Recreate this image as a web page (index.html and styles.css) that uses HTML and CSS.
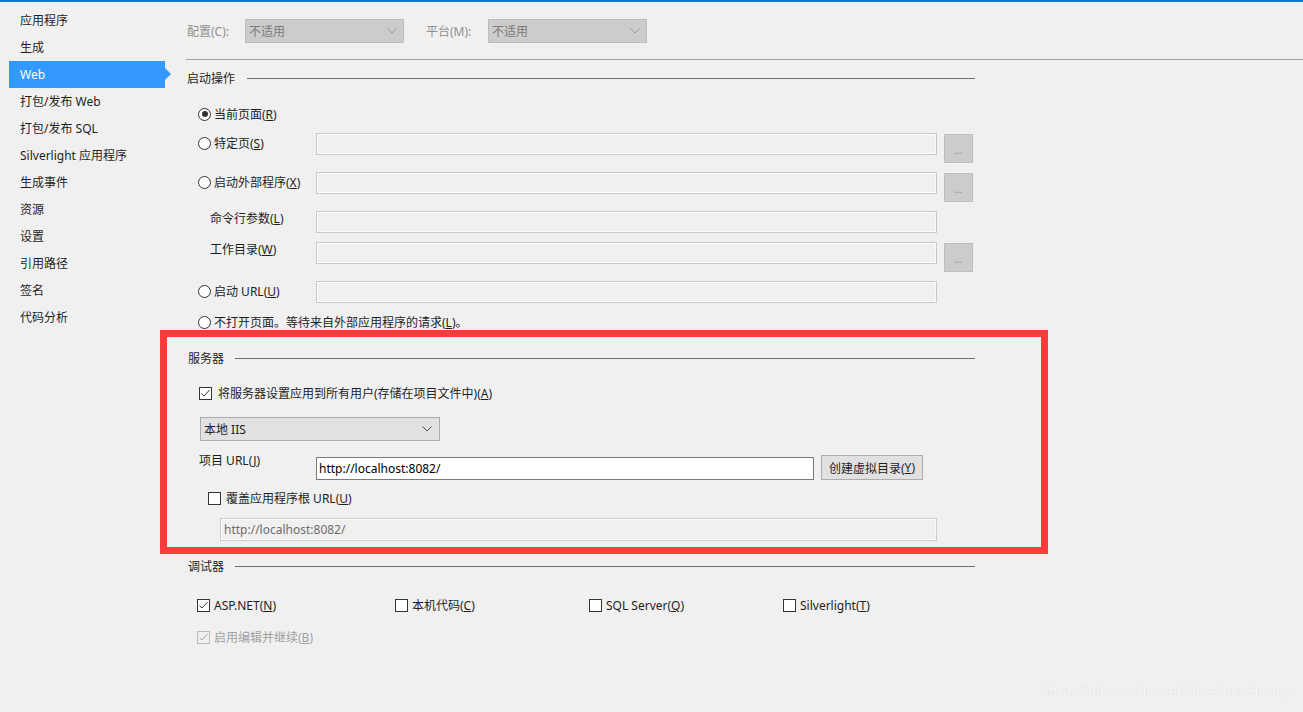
FILE: index.html
```html
<!DOCTYPE html>
<html lang="zh-CN">
<head>
<meta charset="utf-8">
<title>Web</title>
<link rel="stylesheet" href="styles.css">
</head>
<body>
<div class="topbar"></div>
<div class="layout">
  <nav class="sidebar">
    <div class="nav-item">应用程序</div>
    <div class="nav-item">生成</div>
    <div class="nav-item active">Web</div>
    <div class="nav-item">打包/发布 Web</div>
    <div class="nav-item">打包/发布 SQL</div>
    <div class="nav-item">Silverlight 应用程序</div>
    <div class="nav-item">生成事件</div>
    <div class="nav-item">资源</div>
    <div class="nav-item">设置</div>
    <div class="nav-item">引用路径</div>
    <div class="nav-item">签名</div>
    <div class="nav-item">代码分析</div>
  </nav>
  <main class="main">
    <div class="cfg-row">
      <span class="cfg-label">配置(C):</span>
      <div class="cfg-select"><span>不适用</span><svg class="chev" width="10" height="6" viewBox="0 0 10 6"><polyline points="0.5,0.5 5,5 9.5,0.5" fill="none" stroke="#9a9a9a" stroke-width="1"/></svg></div>
      <span class="cfg-label cfg-label2">平台(M):</span>
      <div class="cfg-select"><span>不适用</span><svg class="chev" width="10" height="6" viewBox="0 0 10 6"><polyline points="0.5,0.5 5,5 9.5,0.5" fill="none" stroke="#9a9a9a" stroke-width="1"/></svg></div>
    </div>
    <div class="rule"></div>

    <div class="sec sec-start"><span class="sec-title">启动操作</span><span class="sec-line"></span></div>

    <div class="opt-row row-a">
      <div class="opt-label"><span class="radio checked"></span>当前页面(<u>R</u>)</div>
    </div>
    <div class="opt-row gap-s">
      <div class="opt-label"><span class="radio"></span>特定页(<u>S</u>)</div>
      <div class="field"></div>
      <div class="browse">...</div>
    </div>
    <div class="opt-row gap-l">
      <div class="opt-label"><span class="radio"></span>启动外部程序(<u>X</u>)</div>
      <div class="field"></div>
      <div class="browse">...</div>
    </div>
    <div class="opt-row gap-l">
      <div class="sub-label">命令行参数(<u>L</u>)</div>
      <div class="field"></div>
    </div>
    <div class="opt-row gap-s">
      <div class="sub-label">工作目录(<u>W</u>)</div>
      <div class="field"></div>
      <div class="browse">...</div>
    </div>
    <div class="opt-row gap-l">
      <div class="opt-label"><span class="radio"></span>启动 URL(<u>U</u>)</div>
      <div class="field"></div>
    </div>
    <div class="opt-row row-g gap-s">
      <div class="opt-label wide"><span class="radio"></span>不打开页面。等待来自外部应用程序的请求(<u>L</u>)。</div>
    </div>

    <div class="sec sec-server"><span class="sec-title">服务器</span><span class="sec-line"></span></div>

    <div class="check-row server-check">
      <span class="checkbox"><svg width="11" height="11" viewBox="0 0 11 11"><polyline points="1.5,5.5 4,8 9.5,2" fill="none" stroke="#333" stroke-width="1"/></svg></span>
      <span>将服务器设置应用到所有用户(存储在项目文件中)(<u>A</u>)</span>
    </div>

    <div class="server-select"><span>本地 IIS</span><svg width="10" height="6" viewBox="0 0 10 6"><polyline points="0.5,0.5 5,5 9.5,0.5" fill="none" stroke="#505050" stroke-width="1"/></svg></div>

    <div class="url-row">
      <div class="url-label">项目 URL(<u>J</u>)</div>
      <div class="url-input">http://localhost:8082/</div>
      <div class="btn">创建虚拟目录(<u>Y</u>)</div>
    </div>

    <div class="check-row override-check">
      <span class="checkbox"></span>
      <span>覆盖应用程序根 URL(<u>U</u>)</span>
    </div>

    <div class="disabled-input">http://localhost:8082/</div>

    <div class="sec sec-debug"><span class="sec-title">调试器</span><span class="sec-line"></span></div>

    <div class="debug-row">
      <div class="debug-item w198"><span class="checkbox"><svg width="11" height="11" viewBox="0 0 11 11"><polyline points="1.5,5.5 4,8 9.5,2" fill="none" stroke="#333" stroke-width="1"/></svg></span><span>ASP.NET(<u>N</u>)</span></div>
      <div class="debug-item w194"><span class="checkbox"></span><span>本机代码(<u>C</u>)</span></div>
      <div class="debug-item w194"><span class="checkbox"></span><span>SQL Server(<u>Q</u>)</span></div>
      <div class="debug-item"><span class="checkbox"></span><span>Silverlight(<u>T</u>)</span></div>
    </div>
    <div class="debug-row disabled-row">
      <div class="debug-item"><span class="checkbox dis"><svg width="11" height="11" viewBox="0 0 11 11"><polyline points="1.5,5.5 4,8 9.5,2" fill="none" stroke="#a8a8a8" stroke-width="1"/></svg></span><span>启用编辑并继续(<u>B</u>)</span></div>
    </div>
  </main>
</div>
<div class="annot"></div>
<div class="watermark">https://blog.csdn.net/SherlockHuang</div>
</body>
</html>
```

FILE: styles.css
```css
html, body {
  margin: 0;
  padding: 0;
}
body {
  position: relative;
  width: 1303px;
  height: 712px;
  overflow: hidden;
  background: #f0f0f0;
  color: #1e1e1e;
  font-family: "Segoe UI", "Noto Sans", "Noto Sans CJK SC", sans-serif;
  font-size: 12px;
}
u { text-decoration: underline; text-underline-offset: 1px; }

.topbar {
  height: 2px;
  background: #0e78cc;
}
.layout {
  display: flex;
}
.sidebar {
  width: 186px;
  flex: none;
  padding-top: 5px;
  box-sizing: border-box;
}
.nav-item {
  position: relative;
  margin-left: 9px;
  width: 156px;
  height: 27px;
  line-height: 27px;
  padding-left: 11px;
  box-sizing: border-box;
  white-space: nowrap;
}
.nav-item.active {
  background: #3399ff;
  color: #ffffff;
}
.nav-item.active::after {
  content: "";
  position: absolute;
  right: -6px;
  top: 7px;
  border-left: 6px solid #3399ff;
  border-top: 6.5px solid transparent;
  border-bottom: 6.5px solid transparent;
}

.main {
  flex: 1;
}

/* configuration row */
.cfg-row {
  display: flex;
  align-items: center;
  height: 24px;
  margin-top: 17px;
  color: #8f8f8f;
}
.cfg-label {
  width: 59px;
  padding-left: 1px;
  box-sizing: border-box;
  white-space: nowrap;
}
.cfg-label2 {
  margin-left: 22px;
  width: 62px;
  padding-left: 0;
}
.cfg-select {
  width: 159px;
  height: 24px;
  box-sizing: border-box;
  background: #cccccc;
  border: 1px solid #bdbdbd;
  padding: 0 6px 0 3px;
  display: flex;
  align-items: center;
  justify-content: space-between;
  color: #7a7a7a;
}
.rule {
  margin-top: 16px;
  height: 1px;
  background: #a0a0a0;
}

/* section headers */
.sec {
  display: flex;
  align-items: center;
  width: 789px;
  height: 16px;
}
.sec-title {
  padding-left: 1px;
  white-space: nowrap;
}
.sec-line {
  flex: 1;
  height: 1px;
  background: #6e6e6e;
  margin-left: 12px;
}
.sec-start { margin-top: 10px; }
.sec-server { margin-top: 18px; }
.sec-server .sec-title, .sec-debug .sec-title { padding-left: 2px; }
.sec-server .sec-line, .sec-debug .sec-line { margin-left: 11px; }
.sec-debug { margin-top: 17px; }

/* startup option rows */
.opt-row {
  display: flex;
  align-items: flex-start;
  height: 22px;
}
.row-a { margin-top: 18px; height: 20px; }
.row-g { height: 20px; }
.gap-s { margin-top: 9px; }
.gap-l { margin-top: 17px; }
.opt-label {
  width: 130px;
  height: 20px;
  display: flex;
  align-items: center;
  padding-left: 12px;
  box-sizing: border-box;
  white-space: nowrap;
}
.opt-label.wide { width: auto; }
.sub-label {
  width: 130px;
  height: 16px;
  line-height: 16px;
  padding-left: 24px;
  box-sizing: border-box;
  white-space: nowrap;
}
.radio {
  width: 13px;
  height: 13px;
  border-radius: 50%;
  border: 1px solid #333333;
  background: #ffffff;
  box-sizing: border-box;
  margin-right: 3px;
  flex: none;
  position: relative;
}
.radio.checked::after {
  content: "";
  position: absolute;
  left: 2.5px;
  top: 2.5px;
  width: 6px;
  height: 6px;
  border-radius: 50%;
  background: #333333;
}
.field {
  width: 621px;
  height: 22px;
  box-sizing: border-box;
  border: 1px solid #c9c9c9;
  box-shadow: inset 0 0 0 1px #fbfbfb;
  background: #f0f0f0;
  flex: none;
}
.browse {
  width: 29px;
  height: 29px;
  margin-left: 7px;
  margin-top: 1px;
  box-sizing: border-box;
  background: #cccccc;
  border: 1px solid #bfbfbf;
  color: #8c8c8c;
  font-size: 10px;
  line-height: 10px;
  display: flex;
  justify-content: center;
  align-items: flex-end;
  padding-bottom: 7px;
  flex: none;
}

/* server section */
.check-row {
  display: flex;
  align-items: center;
  height: 20px;
  white-space: nowrap;
}
.checkbox {
  width: 13px;
  height: 13px;
  box-sizing: border-box;
  border: 1px solid #333333;
  background: #ffffff;
  flex: none;
  display: flex;
  align-items: center;
  justify-content: center;
  margin-right: 5px;
}
.checkbox.dis {
  border-color: #bcbcbc;
  background: #f0f0f0;
}
.server-check {
  margin-top: 17px;
  padding-left: 13px;
}
.server-check .checkbox { margin-right: 6px; }
.server-select {
  margin-top: 14px;
  margin-left: 14px;
  width: 240px;
  height: 24px;
  box-sizing: border-box;
  background: #e1e1e1;
  border: 1px solid #adadad;
  padding: 0 7px 0 3px;
  display: flex;
  align-items: center;
  justify-content: space-between;
}
.url-row {
  margin-top: 14px;
  display: flex;
  align-items: flex-start;
  height: 25px;
}
.url-label {
  width: 130px;
  margin-top: -2px;
  height: 16px;
  line-height: 16px;
  padding-left: 13px;
  box-sizing: border-box;
  white-space: nowrap;
}
.url-input {
  margin-top: 2px;
  width: 498px;
  height: 23px;
  box-sizing: border-box;
  background: #ffffff;
  border: 1px solid #7a7a7a;
  padding-left: 2px;
  line-height: 21px;
  color: #000000;
  flex: none;
}
.btn {
  margin-left: 7px;
  width: 102px;
  height: 25px;
  box-sizing: border-box;
  background: #e1e1e1;
  border: 1px solid #adadad;
  display: flex;
  align-items: center;
  justify-content: center;
  white-space: nowrap;
  flex: none;
}
.override-check {
  margin-top: 8px;
  padding-left: 22px;
}
.disabled-input {
  margin-top: 10px;
  margin-left: 34px;
  width: 717px;
  height: 23px;
  box-sizing: border-box;
  border: 1px solid #cccccc;
  box-shadow: inset 0 0 0 1px #fbfbfb;
  background: #f0f0f0;
  color: #6d6d6d;
  padding-left: 3px;
  line-height: 21px;
}

/* debugger section */
.debug-row {
  margin-top: 21px;
  display: flex;
  align-items: center;
  height: 20px;
  padding-left: 11px;
}
.debug-item {
  display: flex;
  align-items: center;
  white-space: nowrap;
}
.debug-item .checkbox { margin-right: 4px; }
.w198 { width: 198px; }
.w194 { width: 194px; }
.disabled-row {
  margin-top: 12px;
  color: #a0a0a0;
}

/* annotation overlay */
.annot {
  position: absolute;
  left: 160px;
  top: 330px;
  width: 888px;
  height: 224px;
  box-sizing: border-box;
  border: 7px solid #fe3a3a;
  pointer-events: none;
}
.watermark {
  position: absolute;
  left: 1040px;
  top: 683px;
  font-family: "Liberation Sans", Arial, sans-serif;
  font-size: 15.8px;
  color: #f8f8f8;
  text-shadow: 0 0 1px #cfcfcf;
  white-space: nowrap;
}
```
